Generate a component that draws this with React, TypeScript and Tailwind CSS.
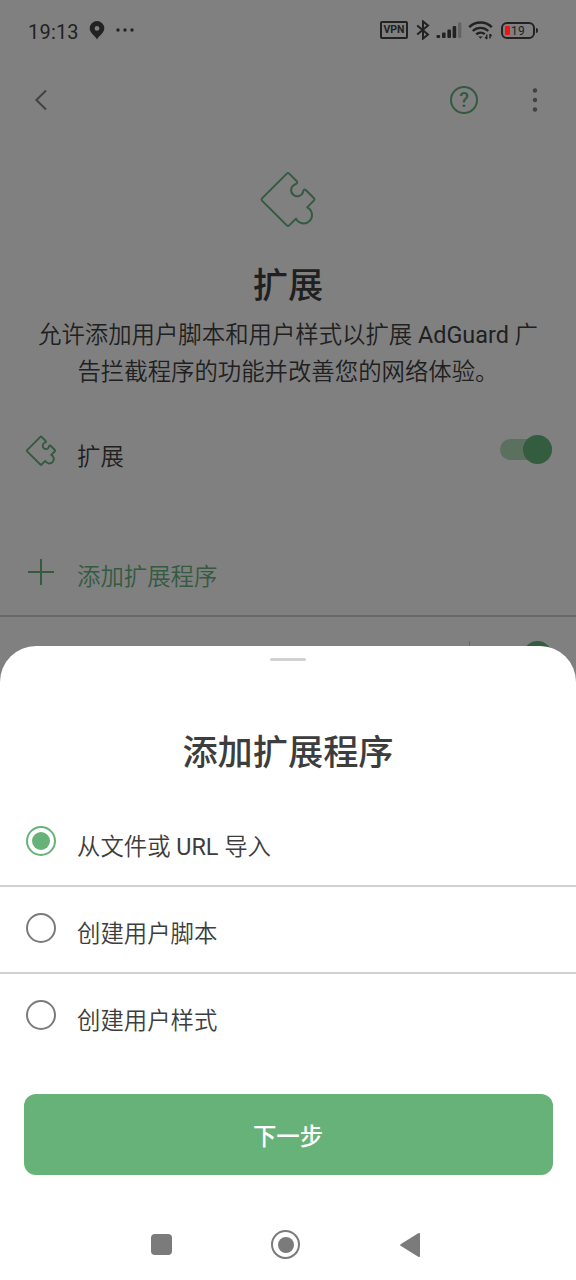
import { useState, type ReactNode } from "react";
import clsx from "clsx";

const options: ReactNode[] = [
  <>
    从文件或 <span className="font-normal">URL</span> 导入
  </>,
  "创建用户脚本",
  "创建用户样式",
];

function PuzzleIcon({ className, strokeWidth }: { className?: string; strokeWidth: number }) {
  return (
    <svg
      viewBox="0 0 60 60"
      fill="none"
      stroke="currentColor"
      strokeWidth={strokeWidth}
      strokeLinejoin="round"
      strokeLinecap="round"
      className={className}
    >
      <path d="M31.2 3.6 L38.8 11.2 Q40 12.8 38.2 13.8 L36 15 A6.1 6.1 0 1 0 45.2 21.4 Q46 18.4 48 20.2 L56 28.2 Q57 29.3 56 30.4 L49.2 37.4 A8.4 8.4 0 1 1 38 48.6 L31.2 55.4 Q30 56.6 28.8 55.4 L4 30.6 Q3 29.5 4 28.4 L28.8 3.6 Q30 2.4 31.2 3.6 Z" />
    </svg>
  );
}

function StatusBar() {
  return (
    <div className="flex h-[60px] items-center pr-[38px] pl-7 font-normal text-[#222]">
      <span className="mt-[3px] w-[50px] text-[20px] leading-6 tracking-[0.2px] whitespace-nowrap">19:13</span>
      <svg viewBox="0 0 16 20" className="ml-[11px] h-5 w-4" fill="currentColor">
        <path
          fillRule="evenodd"
          d="M8 1a7.3 7.3 0 0 0-7.3 7.3C.7 13 5.5 15 8 19.4 10.5 15 15.3 13 15.3 8.3A7.3 7.3 0 0 0 8 1zm0 5a2.4 2.4 0 1 1 0 4.8A2.4 2.4 0 0 1 8 6z"
        />
      </svg>
      <svg viewBox="0 0 18 4" className="ml-[11px] h-1 w-[18px]" fill="currentColor">
        <circle cx="2" cy="2" r="1.7" />
        <circle cx="9" cy="2" r="1.7" />
        <circle cx="16" cy="2" r="1.7" />
      </svg>

      <div className="ml-auto flex items-center">
        <span className="flex h-[18px] w-7 items-center justify-center rounded-[2px] border-2 border-current pt-px text-[10.5px] leading-none font-bold">
          VPN
        </span>
        <svg viewBox="0 0 14 20" className="ml-2 h-5 w-[14px]" fill="none" stroke="currentColor" strokeWidth="2">
          <path d="M1.2 5.4 12 14.6 7 18.6V1.4L12 5.4 1.2 14.6" />
        </svg>
        <svg viewBox="0 0 26 17" className="ml-[6px] h-[17px] w-[26px]" fill="currentColor">
          <rect x="0.5" y="13" width="3.6" height="3" rx="1" />
          <rect x="6" y="10.5" width="3.6" height="5.5" rx="1" />
          <rect x="11.4" y="7.5" width="3.6" height="8.5" rx="1" />
          <rect x="16.6" y="4" width="3.6" height="12" rx="1" />
          <rect x="22" y="0.5" width="3.4" height="15.5" rx="1" opacity="0.3" />
        </svg>
        <svg viewBox="0 0 26 20" className="ml-[6px] h-5 w-[26px]" fill="none" stroke="currentColor" strokeWidth="2.4">
          <path d="M1.2 7.2a16 16 0 0 1 22.600 0" />
          <path d="M4.8 11a11 11 0 0 1 15.400 0" />
          <path d="M8.2 14.4a6.5 6.5 0 0 1 8.600-.2" />
          <path d="M10.2 16.4h4.6L12.5 18.8z" fill="currentColor" stroke="none" />
          <path d="M18.8 14.5v4.5M22 18.5v-4.5M17.2 17l1.6 2M23.6 16 22 14.2" strokeWidth="1.4" />
        </svg>
        <div className="ml-[7px] flex h-[17px] w-[34px] items-center rounded-[6px] border-2 border-current pl-[2px]">
          <span className="h-[9px] w-[5px] rounded-[1px] bg-[#f01414]" />
          <span className="mt-px ml-px text-[12px] leading-none tracking-[0.3px]">19</span>
        </div>
        <span className="ml-px h-[5px] w-[2px] rounded-r-sm bg-[#222]" />
      </div>
    </div>
  );
}

function ExtensionsPage() {
  return (
    <div className="h-full text-[#202020]">
      <StatusBar />
      <div className="flex h-20 items-center pr-[31px] pl-[34px]">
        <svg viewBox="0 0 14 22" className="h-[22px] w-[14px] text-[#414141]" fill="none" stroke="currentColor" strokeWidth="2">
          <path d="M12 1.5 2.4 11 12 20.5" />
        </svg>
        <div className="ml-auto flex h-7 w-7 items-center justify-center rounded-full border-2 border-[#345a40] text-[20px] leading-none font-medium text-[#345a40]">
          ?
        </div>
        <svg viewBox="0 0 20 24" className="ml-[47px] h-6 w-5 text-[#414141]" fill="currentColor">
          <circle cx="10" cy="2.5" r="2.2" />
          <circle cx="10" cy="12" r="2.2" />
          <circle cx="10" cy="21.5" r="2.2" />
        </svg>
      </div>

      <div className="flex flex-col items-center pt-[30px]">
        <PuzzleIcon className="h-[60px] w-[60px] text-[#345a40]" strokeWidth={2} />
        <h1 className="mt-[30px] text-[35.2px] leading-[52px] font-medium">扩展</h1>
        <p className="mt-[5px] text-center text-[23.4px] leading-[36.5px]">
          允许添加用户脚本和用户样式以扩展 <span className="font-normal">AdGuard</span> 广
          <br />
          告拦截程序的功能并改善您的网络体验。
        </p>
      </div>

      <div className="mt-[29px] flex h-[60px] items-center pr-6 pl-[25px]">
        <PuzzleIcon className="mt-[3px] h-8 w-8 text-[#345a40]" strokeWidth={3.6} />
        <span className="mt-[17px] ml-5 text-[23.4px]">扩展</span>
        <div className="ml-auto flex h-[21px] w-[52px] items-center justify-end rounded-full bg-[#5b705f]">
          <span className="h-[29px] w-[29px] shrink-0 rounded-full bg-[#345c3e]" />
        </div>
      </div>

      <div className="mt-[61px] flex h-[60px] items-center pl-7 text-[#345a40]">
        <svg viewBox="0 0 26 26" className="mt-[3px] h-[26px] w-[26px]" fill="none" stroke="currentColor" strokeWidth="2">
          <path d="M13 0v26M0 13h26" />
        </svg>
        <span className="mt-4 ml-[23px] text-[23.4px]">添加扩展程序</span>
      </div>

      <div className="mt-[15px] flex justify-end border-t-2 border-[#686868] pt-6 pr-6">
        <span className="h-8 w-px bg-[#686868]" />
        <span className="ml-[53px] h-[29px] w-[29px] rounded-full bg-[#345c3e]" />
      </div>
    </div>
  );
}

function AddExtensionSheet() {
  const [selected, setSelected] = useState(0);

  return (
    <div className="absolute inset-x-0 bottom-0 h-[634px] rounded-t-[36px] bg-white text-[#3d3d3d]">
      <div className="mx-auto mt-3 h-[3px] w-9 rounded-full bg-[#d1d1d1]" />
      <h2 className="mt-[66px] text-center text-[35.2px] leading-[52px] font-medium">添加扩展程序</h2>

      <div className="mt-[21px]">
        {options.map((option, i) => (
          <button
            key={i}
            onClick={() => setSelected(i)}
            className={clsx(
              "flex h-[87px] w-full items-center border-b-2 pl-[26px] text-left",
              i < options.length - 1 ? "border-[#d1d1d1]" : "border-transparent"
            )}
          >
            <span
              className={clsx(
                "-mt-[3px] flex h-[30px] w-[30px] items-center justify-center rounded-full border-2",
                selected === i ? "border-[#67b279]" : "border-[#7b7b7b]"
              )}
            >
              {selected === i && <span className="h-[18px] w-[18px] rounded-full bg-[#67b279]" />}
            </span>
            <span className="mt-[10px] ml-[21px] text-[23.4px]">{option}</span>
          </button>
        ))}
      </div>

      <button className="mx-auto mt-[33px] flex h-[81px] w-[529px] items-center justify-center rounded-xl bg-[#67b279] pt-[6px] text-[23.4px] font-medium text-white">
        下一步
      </button>

      <div className="mt-[55px] flex items-center pl-[151px] text-[#7b7b7b]">
        <span className="h-[21px] w-[21px] rounded-[4px] bg-current" />
        <span className="ml-[99px] flex h-[29px] w-[29px] items-center justify-center rounded-full border-2 border-current">
          <span className="h-4 w-4 rounded-full bg-current" />
        </span>
        <svg viewBox="0 0 20 26" className="ml-[100px] h-[26px] w-5" fill="currentColor">
          <path d="M.6 12.2 18.2 1.2Q20 .4 20 2V24Q20 25.6 18.2 24.8L.6 13.8Q-.2 13 .6 12.2z" />
        </svg>
      </div>
    </div>
  );
}

export default function App() {
  return (
    <div className="relative h-[1280px] w-[576px] overflow-hidden bg-[#808080] font-['Roboto','Noto_Sans_CJK_SC',sans-serif] font-[350]">
      <ExtensionsPage />
      <AddExtensionSheet />
    </div>
  );
}
